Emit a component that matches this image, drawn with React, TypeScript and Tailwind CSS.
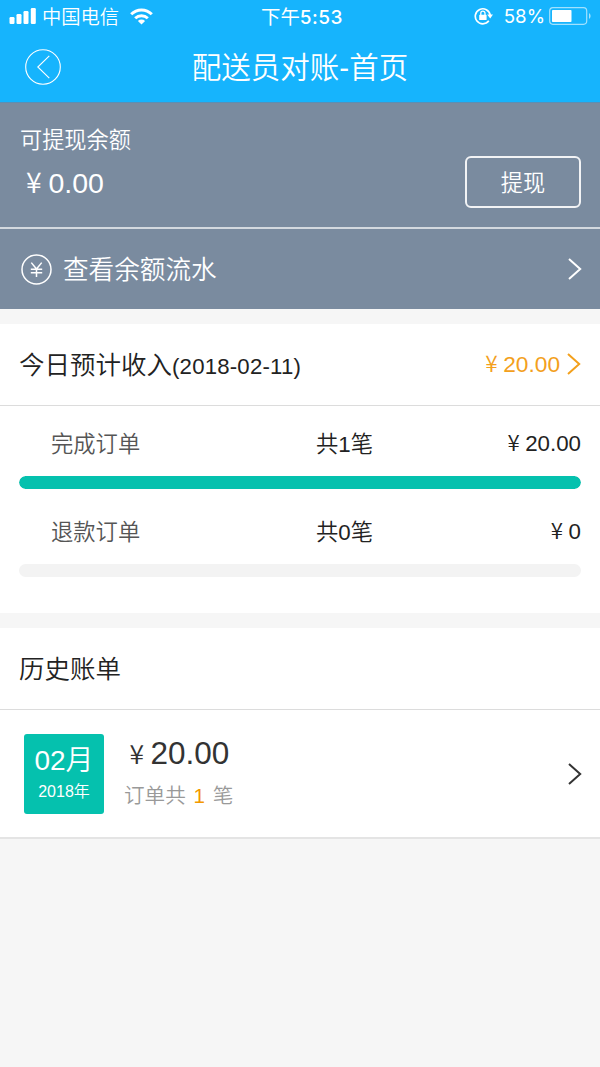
// src/pages/CourierBill.tsx
import type { ReactNode } from "react";

interface ChevronProps {
  className?: string;
}

function Chevron({ className = "" }: ChevronProps) {
  return (
    <svg className={`h-[22px] w-[14px] shrink-0 ${className}`} viewBox="0 0 14 22" fill="none" stroke="currentColor" strokeWidth="2">
      <path d="M1 1 12.2 11 1 21" />
    </svg>
  );
}

// 金额，¥ 占一个全角宽度
function Money({ value, yenClass = "" }: { value: string; yenClass?: string }) {
  return (
    <span>
      <span className={`inline-block w-[1em] pr-px text-center font-['Noto_Sans_CJK_SC',sans-serif] font-[350] leading-none ${yenClass}`}>¥</span>
      {value}
    </span>
  );
}

function StatusBar() {
  return (
    <div className="flex h-8 items-center pl-[9px] pr-[8px]">
      <div className="flex flex-1 items-center">
        {/* 信号 */}
        <svg className="h-4 w-[27px]" viewBox="0 0 27 16" fill="currentColor">
          <rect x="0.5" y="9" width="5" height="7" rx="1.2" />
          <rect x="7.5" y="6" width="5" height="10" rx="1.2" />
          <rect x="14.5" y="3" width="5" height="13" rx="1.2" />
          <rect x="21.8" y="0" width="5" height="16" rx="1.2" />
        </svg>
        <span className="ml-[6px] pt-[3px] text-[19.3px] leading-[29px]">中国电信</span>
        {/* Wi-Fi */}
        <svg className="ml-[11px] h-[17px] w-[23px]" viewBox="0 0 23 17" fill="none" stroke="currentColor" strokeWidth="3">
          <path d="M1.2 6.2a14.6 14.6 0 0 1 20.6 0" />
          <path d="M5.2 10.2a9 9 0 0 1 12.6 0" />
          <path d="M11.5 16.6 7.9 13.1a5.1 5.1 0 0 1 7.2 0Z" fill="currentColor" stroke="none" />
        </svg>
      </div>
      <span className="pl-[3px] pt-[2px] font-['Inter','Noto_Sans_CJK_SC',sans-serif] text-[19px] font-medium leading-[30px]">
        <span className="text-[19.4px] font-normal">下午</span>
        <span className="tracking-[0.5px]">5:53</span>
      </span>
      <div className="flex flex-1 items-center justify-end">
        {/* 方向锁定 */}
        <svg className="h-[18px] w-[19px]" viewBox="0 0 19 18" fill="none" stroke="currentColor" strokeWidth="1.7">
          <path d="M14.8 13.8A7.5 7.5 0 1 1 16.2 8" />
          <path d="M13.2 7.6H19l-2.8 3.8Z" fill="currentColor" stroke="none" />
          <rect x="5.2" y="7.8" width="7.4" height="5.2" rx="0.6" fill="currentColor" stroke="none" />
          <path d="M6.8 8V6.3a2.1 2.1 0 0 1 4.2 0V8" strokeWidth="1.3" />
        </svg>
        <span className="ml-[11px] pt-px font-['Inter',sans-serif] text-[18.7px] leading-[31px] font-normal">58%</span>
        <svg className="ml-[4px] h-[18px] w-[43px]" viewBox="0 0 43 18" fill="none">
          <rect x="0.7" y="0.7" width="37" height="16.6" rx="3.2" stroke="currentColor" strokeOpacity="0.6" strokeWidth="1.2" />
          <rect x="3" y="3" width="19.5" height="12" rx="0.8" fill="currentColor" />
          <path d="M40 6a3.6 3.6 0 0 1 0 6Z" fill="currentColor" fillOpacity="0.6" />
        </svg>
      </div>
    </div>
  );
}

function NavBar({ title }: { title: string }) {
  return (
    <div className="flex h-[70px] items-center px-[25px]">
      <svg className="h-9 w-9" viewBox="0 0 36 36" fill="none" stroke="currentColor" strokeWidth="1.1">
        <circle cx="18" cy="18" r="17.3" />
        <path d="M24.3 6.8 12.8 18l11.5 11.2" />
      </svg>
      <h1 className="flex-1 pr-[36px] pt-[2px] text-center text-[29.5px] leading-[68px]">{title}</h1>
    </div>
  );
}

interface SectionTitleProps {
  children: ReactNode;
  extra?: ReactNode;
}

function SectionTitle({ children, extra }: SectionTitleProps) {
  return (
    <div className="flex h-[82px] items-center justify-between border-b border-[#dcdcdc] px-[19px]">
      <h2 className="pt-[2px] text-[25.5px] text-[#222]">{children}</h2>
      {extra}
    </div>
  );
}

interface OrderProgressProps {
  label: string;
  count: number;
  amount: string;
  percent: number;
}

function OrderProgress({ label, count, amount, percent }: OrderProgressProps) {
  return (
    <div className="h-[88px] px-[19px]">
      <div className="grid h-[54px] grid-cols-[265px_1fr_auto] items-center text-[22.3px] text-[#222]">
        <span className="pl-8 pt-0.5 text-[#555]">{label}</span>
        <span className="pl-8 pt-px">共{count}笔</span>
        <Money value={amount} />
      </div>
      <div className="mt-[5px] h-[13px] overflow-hidden rounded-full bg-[#f3f3f3]">
        <div className="h-full rounded-full bg-[#05c1ae]" style={{ width: `${percent}%` }} />
      </div>
    </div>
  );
}

export default function App() {
  return (
    <div className="min-h-[1067px] w-[600px] bg-[#f6f6f6] font-['Liberation_Sans','Noto_Sans_CJK_SC',sans-serif] font-[350]">
      <header className="h-[103px] border-b border-[#5b8fb4] bg-[#16b4fd] text-white">
        <StatusBar />
        <NavBar title="配送员对账-首页" />
      </header>

      {/* 余额 */}
      <section className="bg-[#7a8b9f] text-white">
        <div className="flex h-[126px] justify-between border-b-2 border-[#d3d9df] pl-5 pr-[19px]">
          <div className="pt-5">
            <p className="text-[22.2px] leading-9">可提现余额</p>
            <p className="text-[28.5px] leading-[49px]">
              <Money value="0.00" />
            </p>
          </div>
          <button className="mt-[53px] h-[52px] w-[116px] rounded-md border-2 border-white/90 pt-[3px] text-[22.2px]">提现</button>
        </div>
        <div className="flex h-[80px] items-center pl-[21px] pr-[18px]">
          <svg className="h-[31px] w-[31px]" viewBox="0 0 31 31" fill="none" stroke="currentColor" strokeWidth="1.5">
            <circle cx="15.5" cy="15.5" r="14.5" />
            <path d="M10.3 8.6 15.5 15l5.2-6.4M15.5 15v8M9.8 15.2h11.4M9.8 18.8h11.4" />
          </svg>
          <span className="ml-[11px] flex-1 pt-0.5 text-[25.6px]">查看余额流水</span>
          <Chevron />
        </div>
      </section>

      {/* 今日收入 */}
      <section className="mt-[15px] h-[289px] bg-white">
        <SectionTitle
          extra={
            <div className="flex items-center text-[22.7px] text-[#f3a01c]">
              <Money value="20.00" />
              <Chevron className="ml-[7px]" />
            </div>
          }
        >
          今日预计收入<span className="text-[22.2px] tracking-[0.2px]">(2018-02-11)</span>
        </SectionTitle>
        <div className="pt-[11px]">
          <OrderProgress label="完成订单" count={1} amount="20.00" percent={100} />
          <OrderProgress label="退款订单" count={0} amount="0" percent={0} />
        </div>
      </section>

      {/* 历史账单 */}
      <section className="mt-[15px] bg-white">
        <SectionTitle>历史账单</SectionTitle>
        <div className="flex h-[129px] items-center border-b-2 border-[#e4e4e4] pl-6 pr-[18px]">
          <div className="h-20 w-20 rounded-[3px] bg-[#05c1ae] pt-[7px] text-center text-white">
            <p className="text-[28px] leading-[40px]">02月</p>
            <p className="text-base leading-[22px]">2018年</p>
          </div>
          <div className="ml-5 flex-1 pt-px">
            <p className="text-[31.5px] leading-[44px] text-[#333]">
              <Money value="20.00" yenClass="text-[26.5px]" />
            </p>
            <p className="text-[20.6px] leading-[42px] text-[#999]">
              订单共 <span className="mx-0.5 text-[#f39800]">1</span> 笔
            </p>
          </div>
          <Chevron className="text-[#333]" />
        </div>
      </section>
    </div>
  );
}
